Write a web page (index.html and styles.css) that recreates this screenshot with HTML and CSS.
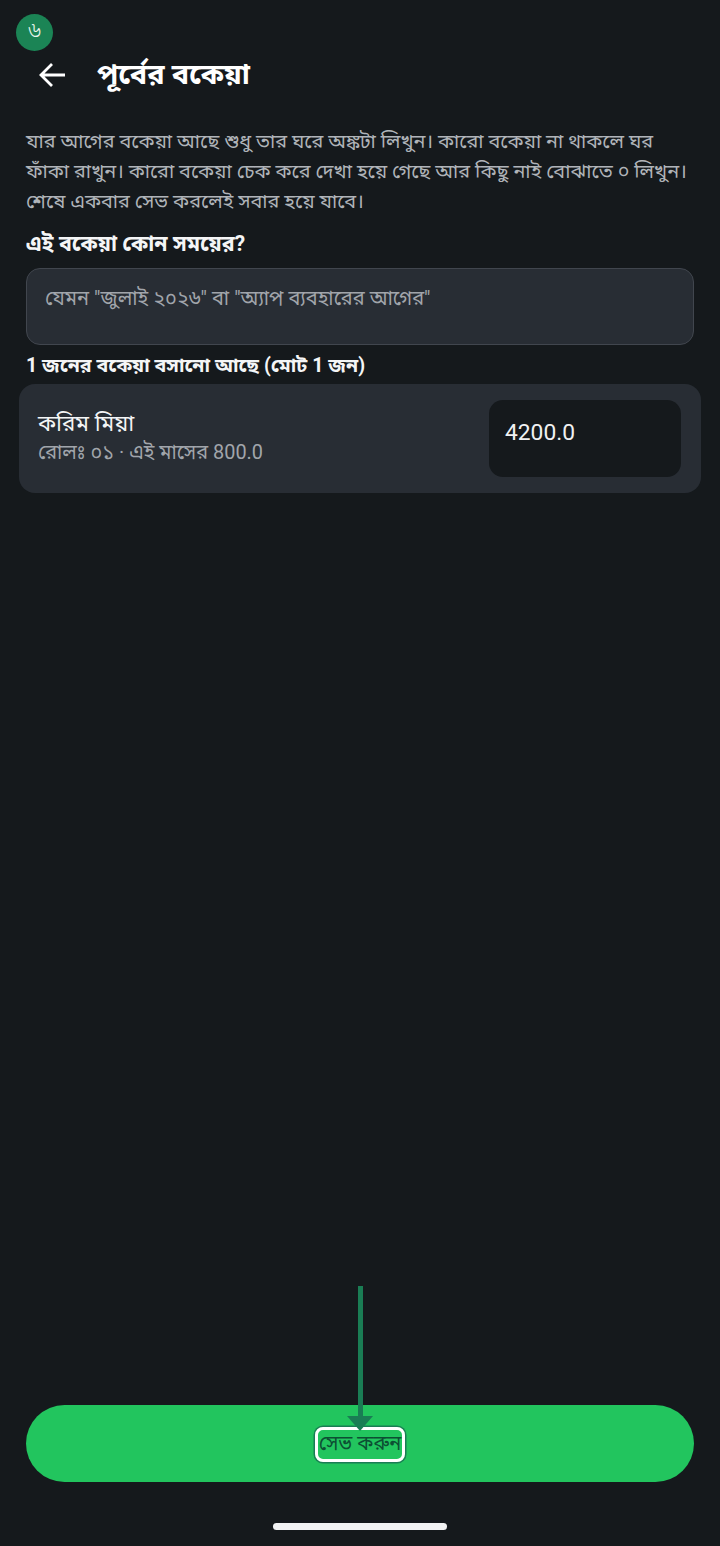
FILE: index.html
```html
<!DOCTYPE html>
<html lang="bn">
<head>
<meta charset="utf-8">
<title>পূর্বের বকেয়া</title>
<link rel="stylesheet" href="styles.css">
</head>
<body>
<div class="screen">
  <div class="step-badge">৬</div>
  <header class="app-bar">
    <svg class="back" viewBox="0 0 28 26" width="28" height="26" aria-hidden="true"><path d="M27 13H3M14 2 3 13l11 11" fill="none" stroke="#fff" stroke-width="2.8"/></svg>
    <h1 class="title">পূর্বের বকেয়া</h1>
  </header>
  <main class="content">
    <p class="intro">যার আগের বকেয়া আছে শুধু তার ঘরে অঙ্কটা লিখুন। কারো বকেয়া না থাকলে ঘর ফাঁকা রাখুন। কারো বকেয়া চেক করে দেখা হয়ে গেছে আর কিছু নাই বোঝাতে ০ লিখুন। শেষে একবার সেভ করলেই সবার হয়ে যাবে।</p>
    <div class="label period-label">এই বকেয়া কোন সময়ের?</div>
    <div class="period-input">যেমন "জুলাই ২০২৬" বা "অ্যাপ ব্যবহারের আগের"</div>
    <div class="label count-label">1 জনের বকেয়া বসানো আছে (মোট 1 জন)</div>
    <div class="student-card">
      <div class="student-info">
        <div class="student-name">করিম মিয়া</div>
        <div class="student-meta">রোলঃ ০১ · এই মাসের 800.0</div>
      </div>
      <div class="amount-field">4200.0</div>
    </div>
  </main>
  <footer class="footer">
    <button class="save-btn" type="button">
      <span class="save-text">সেভ করুন</span>
      <span class="pointer" aria-hidden="true"><span class="pointer-line"></span><span class="pointer-head"></span></span>
    </button>
    <div class="home-bar"></div>
  </footer>
</div>
</body>
</html>
```
FILE: styles.css
```css
* { box-sizing: border-box; }
html, body { margin: 0; padding: 0; }
body {
  background: #15191c;
  color: #fff;
  font-family: Roboto, "Noto Sans Bengali", "Noto Serif Bengali", "Lohit Bengali", "Noto Sans", sans-serif;
}
.screen {
  position: relative;
  width: 720px;
  height: 1546px;
  display: flex;
  flex-direction: column;
  overflow: hidden;
}
.step-badge {
  position: absolute;
  left: 16px;
  top: 14px;
  width: 37px;
  height: 37px;
  border-radius: 50%;
  background: #1b8455;
  color: #e8f5ee;
  font-size: 22px;
  font-weight: 300;
  display: flex;
  align-items: center;
  justify-content: center;
}
.app-bar {
  display: flex;
  align-items: center;
  gap: 31px;
  height: 44px;
  margin-top: 53px;
  padding-left: 38px;
}
.back { flex: none; }
.title {
  margin: -3px 0 0;
  font-size: 28.8px;
  font-weight: 700;
  line-height: 44px;
  white-space: nowrap;
}
.content {
  padding: 0 26px;
  display: flex;
  flex-direction: column;
}
.intro {
  margin: 30px 0 0;
  font-size: 19.85px;
  line-height: 30px;
  color: #b0b4b9;
}
.label {
  font-weight: 700;
  line-height: 26px;
  color: #f4f5f6;
  white-space: nowrap;
}
.period-label { margin-top: 14px; font-size: 21.4px; }
.period-input {
  margin-top: 11px;
  height: 77px;
  padding: 15px 18px;
  background: #282d34;
  border: 1.5px solid #41464e;
  border-radius: 14px;
  font-size: 20px;
  line-height: 28px;
  color: #a1a5ab;
  white-space: nowrap;
}
.count-label { margin-top: 8px; font-size: 19.6px; }
.student-card {
  margin: 5px -7px 0;
  height: 109px;
  padding: 16px 20px 16px 19px;
  background: #282d34;
  border-radius: 16px;
  display: flex;
  align-items: center;
  justify-content: space-between;
}
.student-info { padding-bottom: 2px; }
.student-name {
  font-size: 22.4px;
  line-height: 30px;
  color: #f4f5f6;
}
.student-meta {
  font-size: 19.9px;
  line-height: 30px;
  color: #a1a5ab;
  white-space: nowrap;
}
.amount-field {
  width: 192px;
  height: 77px;
  padding: 17px 16px;
  background: #15191c;
  border-radius: 14px;
  font-size: 22.8px;
  line-height: 32px;
  color: #f0f1f2;
}
.footer {
  margin-top: auto;
  padding: 0 26px 16px;
  display: flex;
  flex-direction: column;
  align-items: center;
}
.save-btn {
  position: relative;
  width: 100%;
  height: 77px;
  padding: 0;
  border: 0;
  border-radius: 39px;
  background: #22c55e;
  display: flex;
  align-items: center;
  justify-content: center;
  font-family: inherit;
}
.save-text {
  width: 90px;
  height: 35px;
  margin-top: 1px;
  border: 3px solid #fff;
  border-radius: 8px;
  box-shadow: 0 0 0 1.5px #1a7d54;
  font-size: 20px;
  line-height: 26px;
  color: #0c4f33;
  white-space: nowrap;
  display: flex;
  justify-content: center;
}
.pointer {
  position: absolute;
  left: 320.5px;
  top: -119px;
  width: 27px;
  display: flex;
  flex-direction: column;
  align-items: center;
}
.pointer-line {
  width: 5px;
  height: 130px;
  background: #1a7d54;
}
.pointer-head {
  width: 0;
  height: 0;
  border-left: 13.5px solid transparent;
  border-right: 13.5px solid transparent;
  border-top: 15px solid #1a7d54;
}
.home-bar {
  margin-top: 41px;
  width: 174px;
  height: 7px;
  border-radius: 4px;
  background: #f2f3f4;
}
```
